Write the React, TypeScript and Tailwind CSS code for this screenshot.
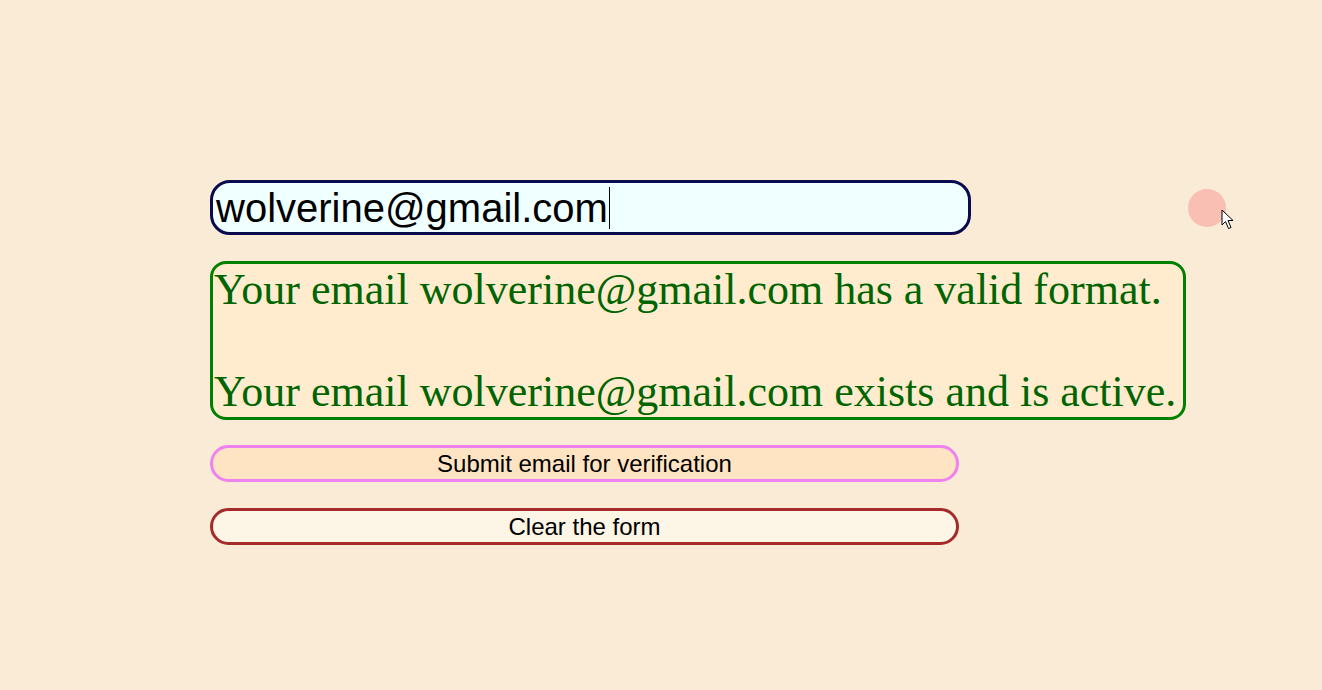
import React from "react";

const email = "wolverine@gmail.com";

export default function App() {
  return (
    <div className="relative min-h-[690px] w-full bg-[#faebd7] pl-[210px] pt-[180px] font-['Liberation_Sans',Arial,sans-serif]">
      {/* email input */}
      <div className="flex h-[55px] w-[761px] items-center rounded-[20px] border-[3px] border-[#0a0a4e] bg-[#f0ffff] px-[3px] text-[40px] leading-none text-black">
        <span>{email}</span>
        <span className="ml-[1px] h-[42px] w-px bg-black" />
      </div>

      {/* result box */}
      <div className="mt-[26px] w-fit rounded-[16px] border-[3px] border-[#008000] bg-[#ffebcd] pl-[1px] pr-[7px] font-['Liberation_Serif','Times_New_Roman',serif] text-[44px] leading-[51px] text-[#006400]">
        <p>Your email {email} has a valid format.</p>
        <p className="h-[51px]" />
        <p>Your email {email} exists and is active.</p>
      </div>

      {/* actions */}
      <div className="mt-[25px] flex w-[749px] flex-col gap-[26px]">
        <button className="h-[37px] rounded-full border-[3px] border-[#ee82ee] bg-[#ffe4c4] text-[24px] leading-none text-black">
          Submit email for verification
        </button>
        <button className="h-[37px] rounded-full border-[3px] border-[#a52a2a] bg-[#fdf5e6] text-[24px] leading-none text-black">
          Clear the form
        </button>
      </div>

      {/* click indicator + mouse pointer */}
      <div className="absolute left-[1188px] top-[189px] h-[38px] w-[38px] rounded-full bg-[#f8bfb2]" />
      <svg
        className="absolute left-[1221px] top-[209px]"
        width="14"
        height="21"
        viewBox="0 0 14 21"
      >
        <path
          d="M1 1 L1 16 L4.5 12.5 L7.5 19.5 L10 18.5 L7 11.5 L12 11.5 Z"
          fill="#ffffff"
          stroke="#000000"
          strokeWidth="1"
          strokeLinejoin="round"
        />
      </svg>
    </div>
  );
}
